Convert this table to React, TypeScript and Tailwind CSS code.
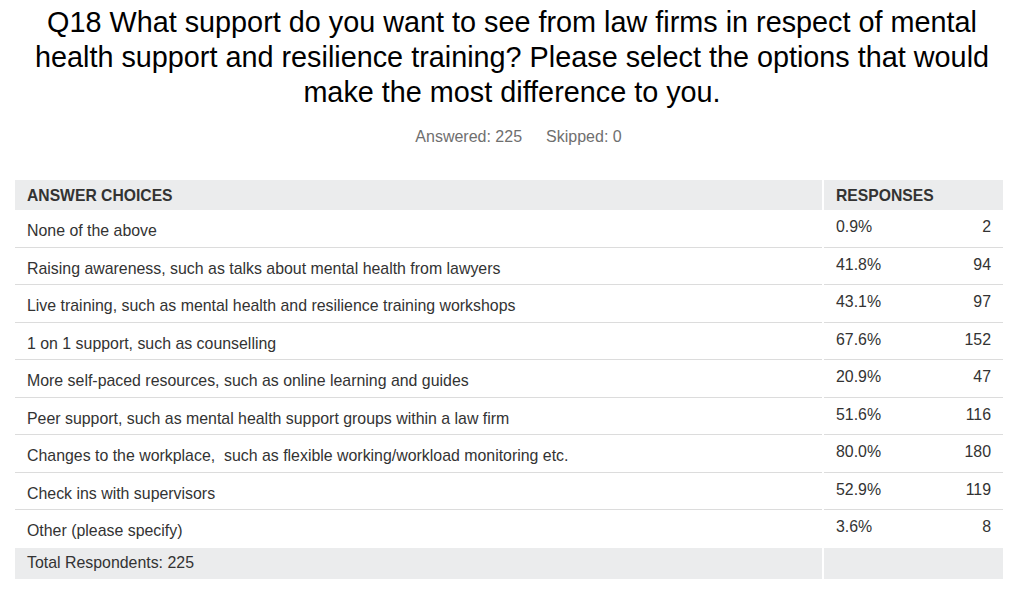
import React from "react";

const rows: [string, string, string][] = [
  ["None of the above", "0.9%", "2"],
  ["Raising awareness, such as talks about mental health from lawyers", "41.8%", "94"],
  ["Live training, such as mental health and resilience training workshops", "43.1%", "97"],
  ["1 on 1 support, such as counselling", "67.6%", "152"],
  ["More self-paced resources, such as online learning and guides", "20.9%", "47"],
  ["Peer support, such as mental health support groups within a law firm", "51.6%", "116"],
  ["Changes to the workplace,\u00a0 such as flexible working/workload monitoring etc.", "80.0%", "180"],
  ["Check ins with supervisors", "52.9%", "119"],
  ["Other (please specify)", "3.6%", "8"],
];

export default function App() {
  return (
    <div
      className="w-[1024px] h-[604px] bg-white overflow-hidden"
      style={{ fontFamily: '"Liberation Sans", Arial, sans-serif' }}
    >
      <div className="pt-[5px] px-[30px] text-center text-[28.8px] leading-[35px] text-black">
        Q18 What support do you want to see from law firms in respect of mental health support and resilience training? Please select the options that would make the most difference to you.
      </div>
      <div className="mt-[18px] pl-[13px] flex justify-center gap-[24px] text-[16px] leading-[18px] text-[#6f6f6f]">
        <span>Answered: 225</span>
        <span>Skipped: 0</span>
      </div>
      <div className="mt-[34px] ml-[15px] w-[988px] text-[15.9px] text-[#333]">
        <div className="flex h-[30px] gap-[2px] font-bold text-[15.7px]">
          <div className="w-[807px] bg-[#ebeced] pl-[12px] pt-[1px] flex items-center">ANSWER CHOICES</div>
          <div className="flex-1 bg-[#ebeced] pl-[12px] pt-[1px] flex items-center">RESPONSES</div>
        </div>
        {rows.map(([label, pct, n], i) => (
          <div key={i} className="flex h-[37.5px] gap-[2px]">
            <div className={`w-[807px] pl-[12px] pt-[12px] leading-[18px] ${i < rows.length - 1 ? "border-b border-[#dcdcdc]" : ""}`}>
              {label}
            </div>
            <div className={`flex-1 pl-[12px] pr-[12px] pt-[8px] leading-[18px] flex justify-between ${i < rows.length - 1 ? "border-b border-[#dcdcdc]" : ""}`}>
              <span>{pct}</span>
              <span>{n}</span>
            </div>
          </div>
        ))}
        <div className="flex h-[31px] gap-[2px]">
          <div className="w-[807px] bg-[#ebeced] pl-[12px] flex items-center">Total Respondents: 225</div>
          <div className="flex-1 bg-[#ebeced]"></div>
        </div>
      </div>
    </div>
  );
}
